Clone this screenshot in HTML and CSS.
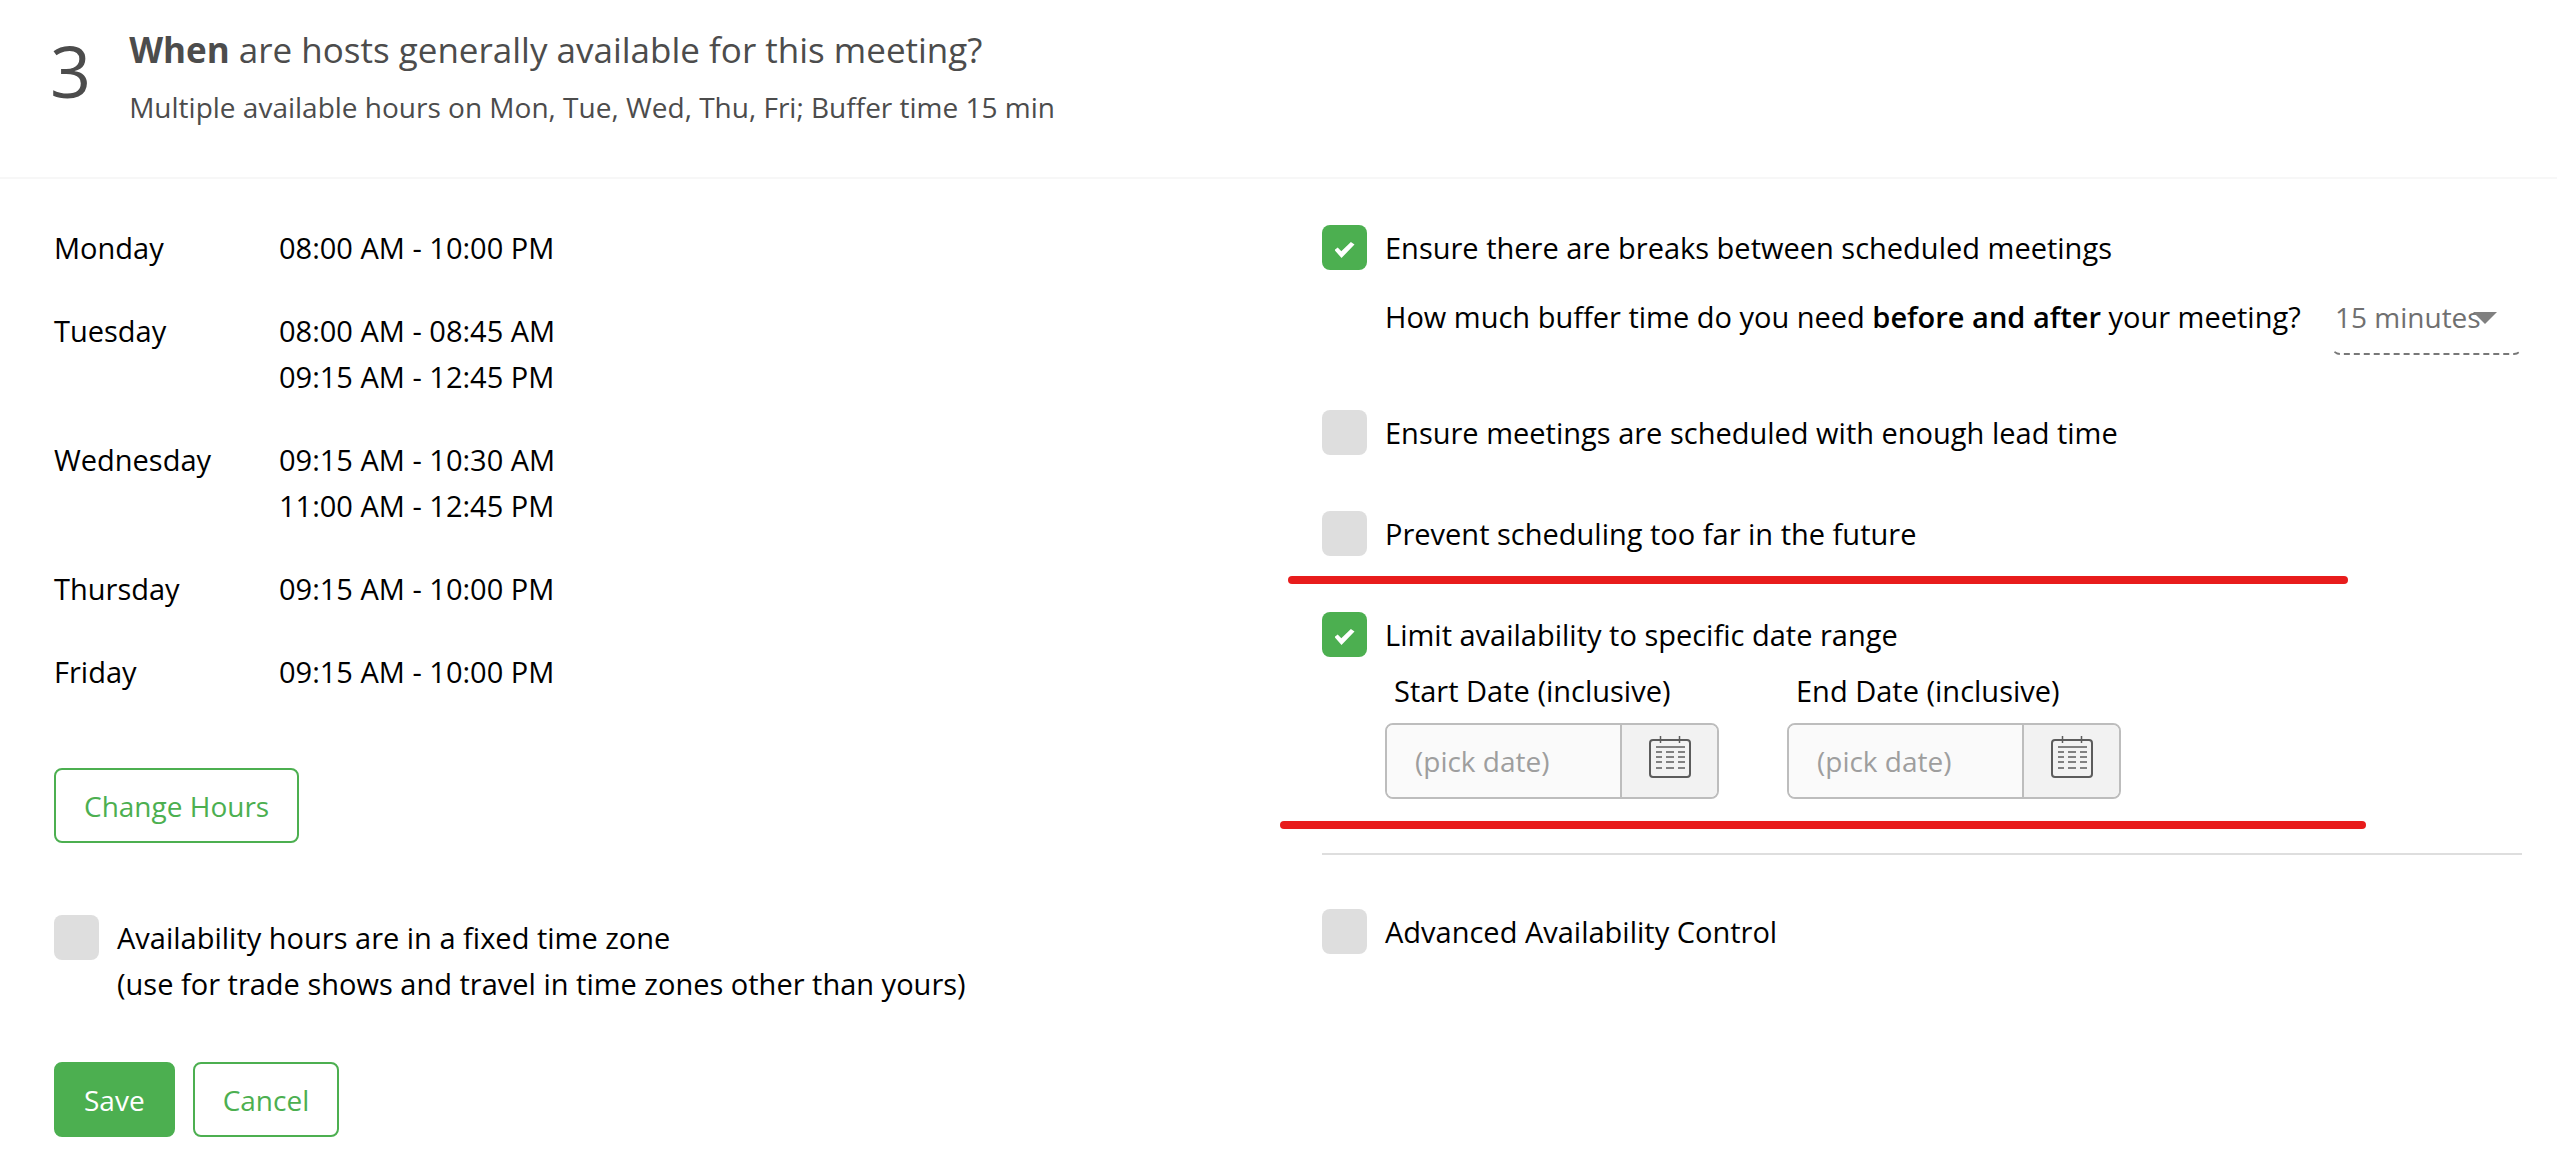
FILE: index.html
```html
<!DOCTYPE html>
<html lang="en">
<head>
  <meta charset="UTF-8">
  <meta name="viewport" content="width=device-width, initial-scale=1.0">
  <title>Meeting availability</title>
  <link rel="stylesheet" href="styles.css">
</head>
<body>
  <svg class="symbols" aria-hidden="true">
    <symbol id="calendar" viewBox="0 0 42 42">
      <g fill="none" stroke="#5c5c5c" stroke-width="2">
        <rect x="1" y="4" width="40" height="37" rx="3"/>
        <path stroke-width="1.500" d="M11.500 0v7M30.500 0v7M7 11h29M7 16h6M17 16h8M29 16h7M7 21h6M17 21h8M29 21h7M7 26h6M17 26h8M29 26h7M7 32h6M17 32h8M29 32h7"/>
      </g>
    </symbol>
  </svg>

  <header class="step-header">
    <div class="step-number">3</div>
    <div>
      <h1 class="step-title"><b>When</b> are hosts generally available for this meeting?</h1>
      <p class="step-summary">Multiple available hours on Mon, Tue, Wed, Thu, Fri; Buffer time 15 min</p>
    </div>
  </header>

  <form class="step-body">
    <section>
      <dl class="hours">
        <dt>Monday</dt>
        <dd>08:00 AM - 10:00 PM</dd>
        <dt>Tuesday</dt>
        <dd>08:00 AM - 08:45 AM<br>09:15 AM - 12:45 PM</dd>
        <dt>Wednesday</dt>
        <dd>09:15 AM - 10:30 AM<br>11:00 AM - 12:45 PM</dd>
        <dt>Thursday</dt>
        <dd>09:15 AM - 10:00 PM</dd>
        <dt>Friday</dt>
        <dd>09:15 AM - 10:00 PM</dd>
      </dl>
      <button type="button" class="btn">Change Hours</button>
      <label class="check fixed-zone">
        <input type="checkbox">
        <span>Availability hours are in a fixed time zone<br>(use for trade shows and travel in time zones other than yours)</span>
      </label>
      <div class="actions">
        <button type="button" class="btn btn-primary">Save</button>
        <button type="button" class="btn">Cancel</button>
      </div>
    </section>

    <section>
      <label class="check">
        <input type="checkbox" checked>
        <span>Ensure there are breaks between scheduled meetings</span>
      </label>
      <div class="buffer">
        <label for="buffer">How much buffer time do you need <b>before and after</b> your meeting?</label>
        <div class="select-wrap">
          <select id="buffer">
            <option>15 minutes</option>
            <option>30 minutes</option>
            <option>45 minutes</option>
          </select>
        </div>
      </div>
      <label class="check spaced">
        <input type="checkbox">
        <span>Ensure meetings are scheduled with enough lead time</span>
      </label>
      <label class="check spaced">
        <input type="checkbox">
        <span>Prevent scheduling too far in the future</span>
      </label>
      <div class="range">
        <label class="check">
          <input type="checkbox" checked>
          <span>Limit availability to specific date range</span>
        </label>
        <div class="dates">
          <div>
            <label class="date-label" for="start">Start Date (inclusive)</label>
            <div class="date-field">
              <input type="text" id="start" placeholder="(pick date)">
              <button type="button" aria-label="Pick start date"><svg><use href="#calendar"/></svg></button>
            </div>
          </div>
          <div>
            <label class="date-label" for="end">End Date (inclusive)</label>
            <div class="date-field">
              <input type="text" id="end" placeholder="(pick date)">
              <button type="button" aria-label="Pick end date"><svg><use href="#calendar"/></svg></button>
            </div>
          </div>
        </div>
      </div>
      <hr class="divider">
      <label class="check">
        <input type="checkbox">
        <span>Advanced Availability Control</span>
      </label>
    </section>
  </form>
</body>
</html>
```
FILE: styles.css
```css
* {
  box-sizing: border-box;
}
body {
  margin: 0;
  font-family: "Open Sans", "Noto Sans", sans-serif;
  font-size: 29px;
  font-weight: 400;
  line-height: 46px;
  color: #000;
  background: #fff;
}
b {
  font-weight: 600;
}
.symbols {
  display: none;
}

/* header */
.step-header {
  display: flex;
  gap: 38px;
  padding: 24px 50px 47px;
  border-bottom: 2px solid #f7f7f7;
  color: #4c4c4c;
}
.step-number {
  font-size: 72px;
  line-height: 92px;
}
.step-title {
  margin: 0;
  font-size: 35px;
  font-weight: 400;
  line-height: 52px;
}
.step-title b {
  font-weight: 700;
}
.step-summary {
  margin: 8px 0 0;
  font-size: 28px;
}

/* two columns */
.step-body {
  display: grid;
  grid-template-columns: 1fr 1fr;
  gap: 68px;
  padding: 46px 35px 16px 54px;
}
.hours {
  display: grid;
  grid-template-columns: 225px 1fr;
  row-gap: 37px;
  margin: 0 0 73px;
}
.hours dd {
  margin: 0;
}
.btn {
  height: 75px;
  padding: 0 28px;
  border: 2px solid #4caf50;
  border-radius: 8px;
  background: #fff;
  color: #4caf50;
  font: inherit;
  font-size: 28px;
  cursor: pointer;
}
.btn-primary {
  background: #4caf50;
  color: #fff;
}
.actions {
  display: flex;
  gap: 18px;
}

/* checkboxes */
.check {
  display: flex;
  gap: 18px;
}
.check input {
  flex: none;
  display: grid;
  place-content: center;
  appearance: none;
  width: 45px;
  height: 45px;
  margin: 0;
  border-radius: 8px;
  background: #dedede;
}
.check input:checked {
  background: #4caf50;
}
.check input:checked::before {
  content: "";
  width: 20px;
  height: 16px;
  margin-top: 5px;
  background: #fff;
  clip-path: polygon(0 50%, 16% 34%, 34% 58%, 82% 0, 100% 16%, 35% 100%);
}
.fixed-zone {
  margin: 72px 0 55px;
}
.spaced {
  margin-bottom: 55px;
}

.buffer {
  display: flex;
  justify-content: space-between;
  margin: 12px 0 55px 63px;
  white-space: nowrap;
}
.buffer label {
  padding-top: 11px;
}
.select-wrap {
  position: relative;
  width: 190px;
}
.select-wrap select {
  appearance: none;
  width: 100%;
  height: 72px;
  padding: 0 0 4px 2px;
  border: 1px solid transparent;
  border-bottom: 2px dashed #777;
  border-radius: 8px;
  background: none;
  color: #707070;
  font: inherit;
  font-size: 28px;
}
.select-wrap::after {
  content: "";
  position: absolute;
  top: 29px;
  right: 25px;
  border: 12px solid transparent;
  border-top-color: #808080;
  border-bottom: 0;
  pointer-events: none;
}

/* date range, marked off above and below */
.range {
  position: relative;
}
.range::before,
.range::after {
  content: "";
  position: absolute;
  height: 8px;
  border-radius: 4px;
  background: #e81c1c;
}
.range::before {
  top: -36px;
  left: -34px;
  right: 174px;
}
.range::after {
  bottom: -30px;
  left: -42px;
  right: 156px;
}
.dates {
  display: flex;
  gap: 68px;
  margin: 10px 0 0 63px;
}
.date-label {
  display: block;
  margin-bottom: 9px;
  padding-left: 9px;
}
.date-field {
  display: flex;
  width: 334px;
  height: 76px;
  border: 2px solid #bdbdbd;
  border-radius: 8px;
  overflow: hidden;
}
.date-field input {
  flex: 1;
  min-width: 0;
  padding: 0 28px;
  border: 0;
  background: #fafafa;
  font: inherit;
  font-size: 28px;
}
.date-field input::placeholder {
  color: #9e9e9e;
}
.date-field button {
  width: 97px;
  padding: 0 0 8px;
  border: 0;
  border-left: 2px solid #bdbdbd;
  background: #f2f2f2;
  cursor: pointer;
}
.date-field svg {
  display: block;
  width: 42px;
  height: 42px;
  margin: 0 auto;
}
.divider {
  margin: 54px 0;
  border: 0;
  border-top: 2px solid #dedede;
}
```
